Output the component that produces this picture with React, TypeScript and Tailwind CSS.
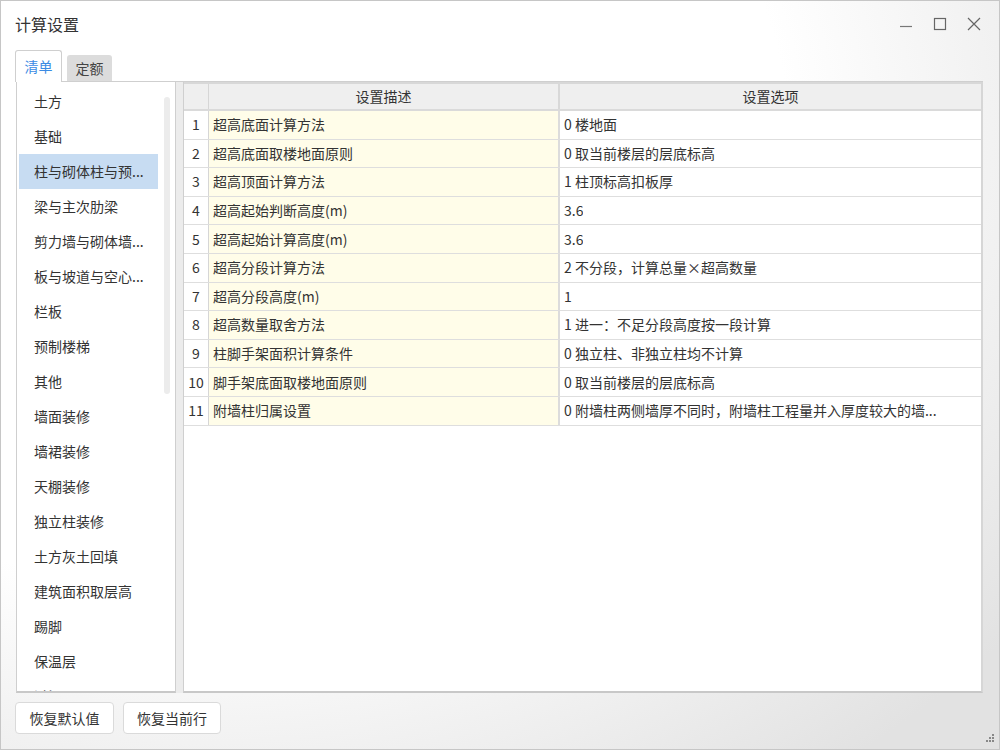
import React from "react";

const listItems = [
  "土方",
  "基础",
  "柱与砌体柱与预...",
  "梁与主次肋梁",
  "剪力墙与砌体墙...",
  "板与坡道与空心...",
  "栏板",
  "预制楼梯",
  "其他",
  "墙面装修",
  "墙裙装修",
  "天棚装修",
  "独立柱装修",
  "土方灰土回填",
  "建筑面积取层高",
  "踢脚",
  "保温层",
  "过梁",
];

const rows: [string, string][] = [
  ["超高底面计算方法", "0 楼地面"],
  ["超高底面取楼地面原则", "0 取当前楼层的层底标高"],
  ["超高顶面计算方法", "1 柱顶标高扣板厚"],
  ["超高起始判断高度(m)", "3.6"],
  ["超高起始计算高度(m)", "3.6"],
  ["超高分段计算方法", "2 不分段，计算总量×超高数量"],
  ["超高分段高度(m)", "1"],
  ["超高数量取舍方法", "1 进一：不足分段高度按一段计算"],
  ["柱脚手架面积计算条件", "0 独立柱、非独立柱均不计算"],
  ["脚手架底面取楼地面原则", "0 取当前楼层的层底标高"],
  ["附墙柱归属设置", "0 附墙柱两侧墙厚不同时，附墙柱工程量并入厚度较大的墙..."],
];

const font = {
  fontFamily: '"Noto Sans CJK SC", "Noto Sans", "Liberation Sans", sans-serif',
};

export default function App() {
  return (
    <div
      style={font}
      className="w-[1000px] h-[750px] border border-[#c6c6c6] flex flex-col text-[#333] text-[14px] bg-[radial-gradient(ellipse_farthest-corner_at_20%_18%,#ffffff_52%,#e2e2e2_92%)] relative overflow-hidden"
    >
      {/* title bar */}
      <div className="h-[48px] flex items-center pl-[14px] pr-[17px]">
        <div className="text-[16px] text-[#333] leading-none -mt-[2px]">计算设置</div>
        <div className="ml-auto flex items-center gap-[18px] -mt-[2px]">
          <svg width="16" height="16" viewBox="0 0 16 16">
            <line x1="2" y1="10.5" x2="14" y2="10.5" stroke="#777" strokeWidth="1.2" />
          </svg>
          <svg width="16" height="16" viewBox="0 0 16 16">
            <rect x="2.5" y="2.5" width="11" height="11" fill="none" stroke="#666" strokeWidth="1.2" />
          </svg>
          <svg width="16" height="16" viewBox="0 0 16 16">
            <path d="M2 2 L14 14 M14 2 L2 14" stroke="#666" strokeWidth="1.2" />
          </svg>
        </div>
      </div>

      {/* tabs */}
      <div className="h-[32px] flex items-end pl-[14px] gap-[5px] relative">
        <div className="h-[32px] w-[47px] bg-white border border-[#cfcfcf] border-b-0 rounded-t-[3px] flex items-center justify-center text-[#3b8be3] z-10 -mb-px">
          清单
        </div>
        <div className="h-[26px] w-[45px] bg-[#dcdcdc] rounded-t-[3px] flex items-center justify-center text-[#444]">
          定额
        </div>
      </div>

      {/* main */}
      <div className="flex h-[612px] ml-[15px] mr-[16px] border-t border-[#cfcfcf]">
        {/* left list */}
        <div className="w-[160px] h-full bg-white border border-t-0 border-[#cfcfcf] border-b-[#c8c8c8] border-b-2 relative overflow-hidden">
          <div className="flex flex-col pt-[2px] pl-[2px] pr-[17px]">
            {listItems.map((t, i) => (
              <div
                key={t}
                className={
                  "h-[35px] shrink-0 flex items-center pl-[15px] whitespace-nowrap " +
                  (i === 2 ? "bg-[#c7dcf2]" : "")
                }
              >
                {t}
              </div>
            ))}
          </div>
          <div className="absolute left-[147px] top-[15px] w-[6px] h-[297px] rounded-[3px] bg-[#ececec]" />
        </div>

        {/* splitter */}
        <div className="w-[7px] h-full bg-[#ececec]" />

        {/* table */}
        <div className="flex-1 h-full bg-white border border-t-0 border-[#cfcfcf] border-b-2 border-b-[#c8c8c8] border-r-2 border-r-[#d6d6d6] flex flex-col">
          <div className="flex h-[29px] shrink-0 bg-[#efefef] border-b-2 border-[#dadada] border-t-2 border-t-[#d8d8d8]">
            <div className="w-[25px] border-r border-[#d6d6d6]" />
            <div className="w-[351px] border-r-2 border-[#d8d8d8] flex items-center justify-center">设置描述</div>
            <div className="flex-1 flex items-center justify-center">设置选项</div>
          </div>
          {rows.map(([d, o], i) => (
            <div key={i} className="flex h-[28.6px] shrink-0 border-b border-[#dedede]">
              <div className="w-[25px] border-r border-[#d6d6d6] flex items-center justify-center">{i + 1}</div>
              <div className="w-[351px] bg-[#fffde9] border-r-2 border-[#dcdcdc] flex items-center pl-[4px] whitespace-nowrap">
                {d}
              </div>
              <div className="flex-1 min-w-0 flex items-center pl-[4px] pr-[14px]">
                <span className="truncate">{o}</span>
              </div>
            </div>
          ))}
        </div>
      </div>

      {/* bottom buttons */}
      <div className="flex gap-[9px] pl-[14px] pt-[9px]">
        <button className="h-[32px] w-[99px] bg-white border border-[#dadada] rounded-[4px] text-[14px] text-[#333] flex items-center justify-center">
          恢复默认值
        </button>
        <button className="h-[32px] w-[98px] bg-white border border-[#dadada] rounded-[4px] text-[14px] text-[#333] flex items-center justify-center">
          恢复当前行
        </button>
      </div>

      {/* resize grip */}
      <svg className="absolute right-[3px] bottom-[3px]" width="12" height="12" viewBox="0 0 12 12">
        <g fill="#888">
          <rect x="8" y="0" width="2" height="2" />
          <rect x="5" y="3" width="2" height="2" />
          <rect x="8" y="3" width="2" height="2" />
          <rect x="2" y="6" width="2" height="2" />
          <rect x="5" y="6" width="2" height="2" />
          <rect x="8" y="6" width="2" height="2" />
        </g>
      </svg>
    </div>
  );
}
